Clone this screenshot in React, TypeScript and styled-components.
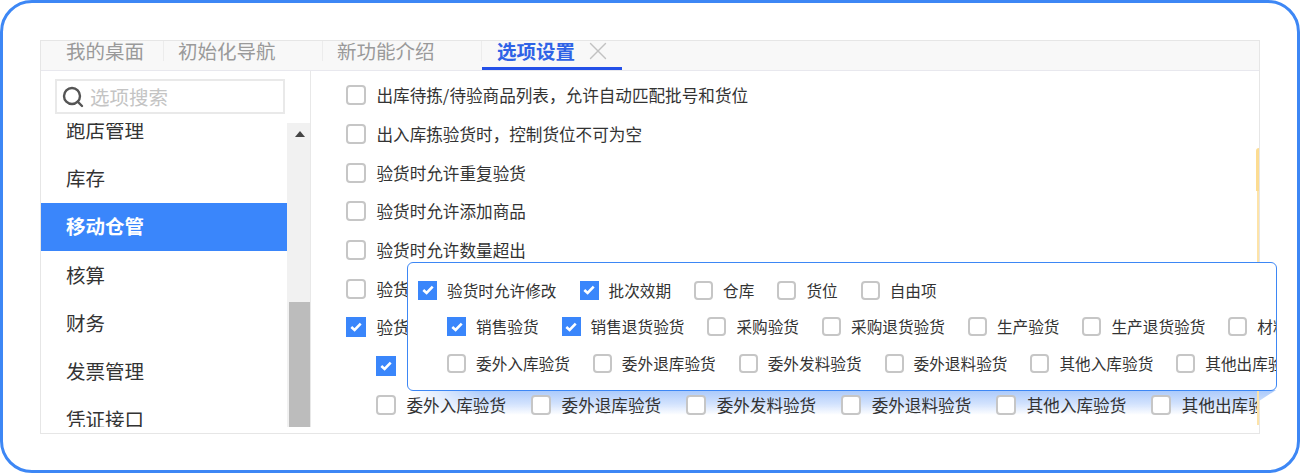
import React from "react";
import styled, { createGlobalStyle } from "styled-components";
import { Search, X } from "lucide-react";

const Global = createGlobalStyle`
  html, body { margin: 0; padding: 0; background: #fff; }
  body { font-family: "Noto Sans CJK SC", "Liberation Sans", sans-serif; }
  * { box-sizing: border-box; }
`;

const Frame = styled.div`
  width: 1300px;
  height: 473px;
  border: 3px solid #3d87f5;
  border-radius: 32px;
  padding: 37px;
  overflow: hidden;
  background: #fff;
`;

const Panel = styled.div`
  position: relative;
  height: 394px;
  border: 1px solid #e6e6e6;
  display: flex;
  flex-direction: column;
`;

const TabBar = styled.div`
  height: 30px;
  flex: none;
  background: #f8f8f8;
  border-bottom: 1px solid #e8e8ee;
  display: flex;
`;

const Tab = styled.div<{ $width: number; $active?: boolean }>`
  position: relative;
  width: ${(p) => p.$width}px;
  height: 29px;
  flex: none;
  padding-left: ${(p) => (p.$active ? 15 : 14)}px;
  display: flex;
  align-items: flex-start;
  font-size: 19.5px;
  line-height: 19px;
  color: ${(p) => (p.$active ? "#2f63e6" : "#9a9a9a")};
  font-weight: ${(p) => (p.$active ? 700 : 400)};
  border-bottom: ${(p) => (p.$active ? "3px solid #2450e8" : "none")};
  white-space: nowrap;
  &::after {
    content: "";
    display: ${(p) => (p.$active ? "none" : "block")};
    position: absolute;
    right: 0;
    top: 0;
    width: 1px;
    height: 20px;
    background: #ececec;
  }
`;

const FirstTab = styled(Tab)`
  padding-left: 25px;
`;

const TabClose = styled(X)`
  flex: none;
  margin: -5px 0 0 8px;
  color: #c2c2c2;
`;

const Body = styled.div`
  flex: 1;
  min-height: 0;
  display: flex;
`;

const Sidebar = styled.div`
  width: 270px;
  flex: none;
  border-right: 1px solid #e8e8e8;
  display: flex;
  flex-direction: column;
  height: 356px;
`;

const SearchWrap = styled.div`
  height: 52px;
  flex: none;
  padding: 8px 25px 0 14px;
`;

const SearchBox = styled.div`
  height: 35px;
  border: 2px solid #e9e9e9;
  display: flex;
  align-items: center;
  padding-left: 4px;
  gap: 5px;
  color: #555;
  font-size: 19.5px;
`;

const Placeholder = styled.span`
  color: #c4c4c4;
`;

const ListArea = styled.div`
  flex: 1;
  min-height: 0;
  display: flex;
`;

const MenuList = styled.div`
  width: 246px;
  flex: none;
  overflow: hidden;
`;

const MenuInner = styled.div`
  margin-top: -16.6px;
`;

const MenuItem = styled.div<{ $active?: boolean }>`
  height: 48.2px;
  display: flex;
  align-items: center;
  padding-left: 25px;
  padding-bottom: 2px;
  font-size: 19.5px;
  color: ${(p) => (p.$active ? "#fff" : "#333")};
  font-weight: ${(p) => (p.$active ? 700 : 400)};
  background: ${(p) => (p.$active ? "#3a86fb" : "transparent")};
`;

const Track = styled.div`
  flex: 1;
  background: #f1f1f1;
  display: flex;
  flex-direction: column;
  justify-content: space-between;
  align-items: center;
  padding-left: 2px;
`;

const Arrow = styled.div`
  margin-top: 8px;
  width: 0;
  height: 0;
  border-left: 5px solid transparent;
  border-right: 5px solid transparent;
  border-bottom: 6px solid #444;
`;

const Thumb = styled.div`
  width: 100%;
  height: 125px;
  background: #bcbcbc;
`;

const Content = styled.div`
  position: relative;
  flex: 1;
  min-width: 0;
  padding: 5px 0 0 35px;
  overflow: hidden;
  height: 362px;
`;

const Stripe = styled.div`
  position: absolute;
  right: 0;
  top: 79px;
  bottom: 8px;
  width: 2px;
  background: #fde3a8;
`;

const StripeThick = styled.div`
  position: absolute;
  right: 0;
  top: 77px;
  height: 43px;
  width: 3px;
  border-radius: 3px 0 0 0;
  background: #fcdc92;
`;

const Row = styled.div<{ $indent?: boolean }>`
  height: 38.67px;
  display: flex;
  align-items: center;
  gap: 25px;
  padding-left: ${(p) => (p.$indent ? 30 : 0)}px;
  font-size: 16.6px;
  color: #333;
  white-space: nowrap;
  position: relative;
`;

const Option = styled.label<{ $gap?: number }>`
  display: inline-flex;
  align-items: center;
  flex: none;
  gap: ${(p) => p.$gap ?? 10.5}px;
`;

const Box = styled.span<{ $checked?: boolean; $size?: number }>`
  width: ${(p) => p.$size ?? 20}px;
  height: ${(p) => p.$size ?? 20}px;
  flex: none;
  border-radius: ${(p) => (p.$checked ? 0 : 4)}px;
  border: ${(p) => (p.$checked ? "none" : "2px solid #c6c6c6")};
  background: ${(p) => (p.$checked ? "#3a86fb" : "#fff")};
  display: inline-flex;
  align-items: center;
  justify-content: center;
`;

const Check = ({ checked, size }: { checked?: boolean; size?: number }) => (
  <Box $checked={checked} $size={size}>
    {checked && (
      <svg width="12" height="10" viewBox="0 0 12 10" fill="none">
        <path d="M1.3 5 L4.6 8 L10.7 1.6" stroke="#fff" strokeWidth="2.6" />
      </svg>
    )}
  </Box>
);

const Glow = styled.div`
  position: absolute;
  left: 370px;
  top: 349px;
  width: 865px;
  height: 25px;
  background: linear-gradient(to bottom, #a9c9fb 0%, #d2e2fd 55%, rgba(255, 255, 255, 0) 100%);
  clip-path: polygon(0 0, 100% 0, calc(100% - 17px) 11px, calc(100% - 17px) 100%, 0 100%);
  mask-image: linear-gradient(to right, transparent, #000 70px);
`;

const Popup = styled.div`
  position: absolute;
  left: 366px;
  top: 221px;
  width: 870px;
  height: 129px;
  border: 1px solid #3d87f5;
  border-radius: 6px;
  background: #fff;
  padding: 9px 0 0 10px;
  font-size: 15.65px;
  color: #333;
  z-index: 2;
`;

const PopupInner = styled.div`
  overflow: hidden;
  width: 858px;
`;

const PopupRow = styled.div<{ $indent?: boolean }>`
  height: 36.5px;
  display: flex;
  align-items: center;
  gap: 23px;
  padding-left: ${(p) => (p.$indent ? 29 : 0)}px;
  white-space: nowrap;
`;

const simple = [
  "出库待拣/待验商品列表，允许自动匹配批号和货位",
  "出入库拣验货时，控制货位不可为空",
  "验货时允许重复验货",
  "验货时允许添加商品",
  "验货时允许数量超出",
];
const menu = ["跑店管理", "库存", "移动仓管", "核算", "财务", "发票管理", "凭证接口"];
const bottom = ["委外入库验货", "委外退库验货", "委外发料验货", "委外退料验货", "其他入库验货", "其他出库验货"];
const popupTop: [string, boolean][] = [
  ["验货时允许修改", true],
  ["批次效期", true],
  ["仓库", false],
  ["货位", false],
  ["自由项", false],
];
const popupMid: [string, boolean][] = [
  ["销售验货", true],
  ["销售退货验货", true],
  ["采购验货", false],
  ["采购退货验货", false],
  ["生产验货", false],
  ["生产退货验货", false],
  ["材料验货", false],
];

const PopupLine = ({ items, indent }: { items: [string, boolean][]; indent?: boolean }) => (
  <PopupRow $indent={indent}>
    {items.map(([t, c]) => (
      <Option key={t} $gap={10}>
        <Check checked={c} size={19} />
        {t}
      </Option>
    ))}
  </PopupRow>
);

export default function App() {
  return (
    <>
      <Global />
      <Frame>
        <Panel>
          <Glow />
          <TabBar>
            <FirstTab $width={123}>我的桌面</FirstTab>
            <Tab $width={159}>初始化导航</Tab>
            <Tab $width={159}>新功能介绍</Tab>
            <Tab $width={140} $active>
              选项设置
              <TabClose size={30} strokeWidth={1.1} />
            </Tab>
          </TabBar>
          <Body>
            <Sidebar>
              <SearchWrap>
                <SearchBox>
                  <Search size={24} strokeWidth={2.4} />
                  <Placeholder>选项搜索</Placeholder>
                </SearchBox>
              </SearchWrap>
              <ListArea>
                <MenuList>
                  <MenuInner>
                    {menu.map((m) => (
                      <MenuItem key={m} $active={m === "移动仓管"}>
                        {m}
                      </MenuItem>
                    ))}
                  </MenuInner>
                </MenuList>
                <Track>
                  <Arrow />
                  <Thumb />
                </Track>
              </ListArea>
            </Sidebar>
            <Content>
              {simple.map((s) => (
                <Row key={s}>
                  <Option>
                    <Check />
                    {s}
                  </Option>
                </Row>
              ))}
              <Row>
                <Option>
                  <Check />
                  验货
                </Option>
              </Row>
              <Row>
                <Option>
                  <Check checked />
                  验货
                </Option>
              </Row>
              <Row $indent>
                <Check checked />
              </Row>
              <Row $indent>
                {bottom.map((b) => (
                  <Option key={b}>
                    <Check />
                    {b}
                  </Option>
                ))}
              </Row>
              <Stripe />
              <StripeThick />
            </Content>
          </Body>
          <Popup>
            <PopupInner>
              <PopupLine items={popupTop} />
              <PopupLine items={popupMid} indent />
              <PopupLine items={bottom.map((b) => [b, false] as [string, boolean])} indent />
            </PopupInner>
          </Popup>
        </Panel>
      </Frame>
    </>
  );
}
